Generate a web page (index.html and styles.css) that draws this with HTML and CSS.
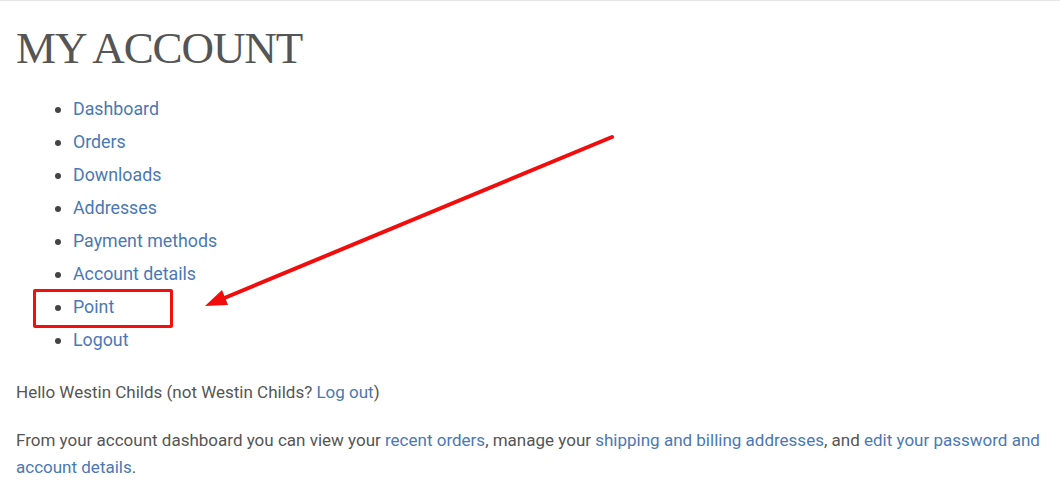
FILE: index.html
```html
<!DOCTYPE html>
<html lang="en">
<head>
<meta charset="utf-8">
<title>My Account</title>
<link rel="stylesheet" href="styles.css">
</head>
<body>
<div class="page">
  <h1 class="title">MY ACCOUNT</h1>
  <ul class="nav">
    <li><a href="#">Dashboard</a></li>
    <li><a href="#">Orders</a></li>
    <li><a href="#">Downloads</a></li>
    <li><a href="#">Addresses</a></li>
    <li><a href="#">Payment methods</a></li>
    <li><a href="#">Account details</a></li>
    <li><a href="#">Point</a></li>
    <li><a href="#">Logout</a></li>
  </ul>
  <p class="text">Hello Westin Childs (not Westin Childs? <a href="#">Log out</a>)</p>
  <p class="text">From your account dashboard you can view your <a href="#">recent orders</a>, manage your <a href="#">shipping and billing addresses</a>, and <a href="#">edit your password and account details</a>.</p>

  <div class="highlight"></div>
  <svg class="arrow" width="1060" height="497" viewBox="0 0 1060 497">
    <line x1="612" y1="137" x2="222" y2="299" stroke="#f20d0d" stroke-width="4" stroke-linecap="round"/>
    <polygon points="205,306 222,290 228,305" fill="#f20d0d"/>
  </svg>
</div>
</body>
</html>
```
FILE: styles.css
```css
html, body {
  margin: 0;
  padding: 0;
  background: #fff;
}
.page {
  position: relative;
  border-top: 1px solid #e6e6e6;
  padding: 0 18px 0 16px;
  height: 496px;
  box-sizing: border-box;
  font-family: Roboto, "Liberation Sans", sans-serif;
  font-size: 17px;
  color: #555;
}
.title {
  font-family: "Liberation Serif", "DejaVu Serif", serif;
  font-weight: 400;
  font-size: 45px;
  letter-spacing: -1.1px;
  line-height: 1.2;
  color: #555;
  margin: 20px 0 0 0;
}
.nav {
  margin: 17px 0 23px 0;
  padding-left: 57px;
  line-height: 33px;
  font-size: 17.8px;
}
.nav li::marker {
  color: #444;
}
a {
  color: #4a78b6;
  text-decoration: none;
}
.text {
  margin: 0 0 21px 0;
  line-height: 27px;
}
.highlight {
  position: absolute;
  left: 33px;
  top: 288px;
  width: 140px;
  height: 39px;
  border: 3px solid #f01010;
  border-radius: 2px;
  box-sizing: border-box;
}
.arrow {
  position: absolute;
  left: 0;
  top: -1px;
  pointer-events: none;
}
```
